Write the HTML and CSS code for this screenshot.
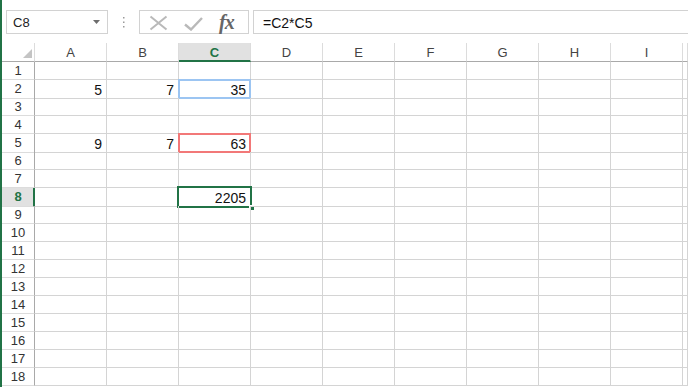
FILE: index.html
```html
<!DOCTYPE html>
<html lang="en">
<head>
    <meta charset="UTF-8">
    <meta name="viewport" content="width=device-width, initial-scale=1.0">
    <title>Book1 - Sheet1</title>
    <link rel="stylesheet" href="styles.css">
</head>
<body>
    <div class="toolbar">
        <div class="namebox">
            <span>C8</span>
            <svg class="caret" width="7" height="4" viewBox="0 0 7 4"><path d="M0 0h7L3.5 4z" fill="#6d6d6d"/></svg>
        </div>
        <div class="grip">
            <svg width="3" height="11" viewBox="0 0 3 11"><g fill="#9a9a9a"><rect x="1" y="0" width="1.5" height="1.5"/><rect x="1" y="4.5" width="1.5" height="1.5"/><rect x="1" y="9" width="1.5" height="1.5"/></g></svg>
        </div>
        <div class="fbuttons">
            <svg class="cancel" width="19" height="16" viewBox="0 0 19 16"><path d="M1.5 1.5L17.5 14.5M17.5 1.5L1.5 14.5" stroke="#b9b9b9" stroke-width="2" fill="none"/></svg>
            <svg class="enter" width="19" height="14" viewBox="0 0 19 14"><path d="M1 7.5L7 12.5L18 1" stroke="#b9b9b9" stroke-width="2.4" fill="none"/></svg>
            <span class="fx">fx</span>
        </div>
        <div class="formula">=C2*C5</div>
    </div>

    <div class="sheet" id="sheet">
        <div class="row head">
            <div class="corner"><svg width="9" height="9" viewBox="0 0 9 9"><path d="M9 0V9H0z" fill="#c4c4c4"/></svg></div>
            <div class="col">A</div>
            <div class="col">B</div>
            <div class="col sel">C</div>
            <div class="col">D</div>
            <div class="col">E</div>
            <div class="col">F</div>
            <div class="col">G</div>
            <div class="col">H</div>
            <div class="col">I</div>
            <div class="col"></div>
        </div>
    </div>

    <script>
        const values = {
            2: { 1: '5', 2: '7', 3: '35' },
            5: { 1: '9', 2: '7', 3: '63' },
            8: { 3: '2205' }
        };
        const marks = { '2-3': 'ref-blue', '5-3': 'ref-red', '8-3': 'active' };
        const sheet = document.getElementById('sheet');

        for (let r = 1; r <= 18; r++) {
            const row = document.createElement('div');
            row.className = 'row';
            const num = document.createElement('div');
            num.className = r === 8 ? 'rownum sel' : 'rownum';
            num.textContent = r;
            row.appendChild(num);
            for (let c = 1; c <= 10; c++) {
                const cell = document.createElement('div');
                cell.className = 'cell';
                if (values[r] && values[r][c]) cell.textContent = values[r][c];
                const mark = marks[r + '-' + c];
                if (mark) {
                    const box = document.createElement('div');
                    box.className = 'mark ' + mark;
                    if (mark === 'active') box.innerHTML = '<span class="handle"></span>';
                    cell.appendChild(box);
                }
                row.appendChild(cell);
            }
            sheet.appendChild(row);
        }
    </script>
</body>
</html>
```

FILE: styles.css
```css
* { box-sizing: border-box; }
html, body { height: 100%; }
body { margin: 0; background: #fff; border-left: 2px solid #217346; font-family: "Liberation Sans", Arial, sans-serif; color: #000; overflow: hidden; }

.toolbar { display: flex; align-items: flex-start; height: 43px; padding: 10px 0 0 4px; }
.namebox { display: flex; align-items: center; justify-content: space-between; width: 102px; height: 24px; border: 1px solid #d2d2d2; padding: 1px 7px 0 6px; font-size: 13px; color: #222; }
.namebox .caret { margin-top: -2px; }
.grip { width: 31px; height: 24px; display: flex; align-items: center; justify-content: center; padding-top: 1px; }
.fbuttons { display: flex; align-items: center; width: 110px; height: 24px; border: 1px solid #d2d2d2; padding-left: 9px; }
.fbuttons .cancel { margin-top: 2px; }
.fbuttons .enter { margin-left: 16px; margin-top: 3px; }
.fx { margin-left: 16px; font-family: "Liberation Serif", "Times New Roman", serif; font-style: italic; font-weight: bold; font-size: 20px; color: #666; letter-spacing: -1px; }
.formula { flex: 1; height: 24px; margin-left: 4px; margin-right: -2px; border: 1px solid #d2d2d2; padding: 2px 0 0 9px; font-size: 14px; line-height: 20px; color: #111; }

.sheet { display: flex; flex-direction: column; }
.row { display: grid; grid-template-columns: 33px repeat(9, 72px) 1fr; height: 18px; }
.row.head { height: 19px; }

.corner, .col { border-right: 1px solid #dcdcdc; border-bottom: 1px solid #a9a9a9; }
.corner { display: flex; align-items: flex-end; justify-content: flex-end; padding: 0 2px 3px 0; }
.col { display: flex; align-items: center; justify-content: center; font-size: 13px; color: #444; padding-top: 1px; }
.col.sel { background: #e1e1e1; color: #217346; font-weight: bold; border-bottom: 2px solid #217346; }

.rownum { border-right: 1px solid #a9a9a9; border-bottom: 1px solid #dcdcdc; text-align: center; font-size: 13px; line-height: 16px; padding-top: 1px; color: #333; }
.rownum.sel { background: #e1e1e1; color: #217346; font-weight: bold; border-right: 2px solid #217346; padding-left: 1px; }

.cell { position: relative; border-right: 1px solid #d4d4d4; border-bottom: 1px solid #d4d4d4; text-align: right; font-size: 14px; line-height: 16px; padding: 2px 4px 0 0; color: #111; }

.mark { position: absolute; pointer-events: none; }
.ref-blue { top: -1px; left: -1px; right: -1px; bottom: -1px; border: 2px solid #9cc5f2; }
.ref-red { top: -1px; left: -1px; right: -1px; bottom: -1px; border: 2px solid #f27878; }
.active { top: -2px; left: -2px; right: -2px; bottom: -2px; border: 2px solid #217346; }
.handle { position: absolute; right: -5px; bottom: -5px; width: 6px; height: 6px; background: #217346; border: 1px solid #fff; }
```
